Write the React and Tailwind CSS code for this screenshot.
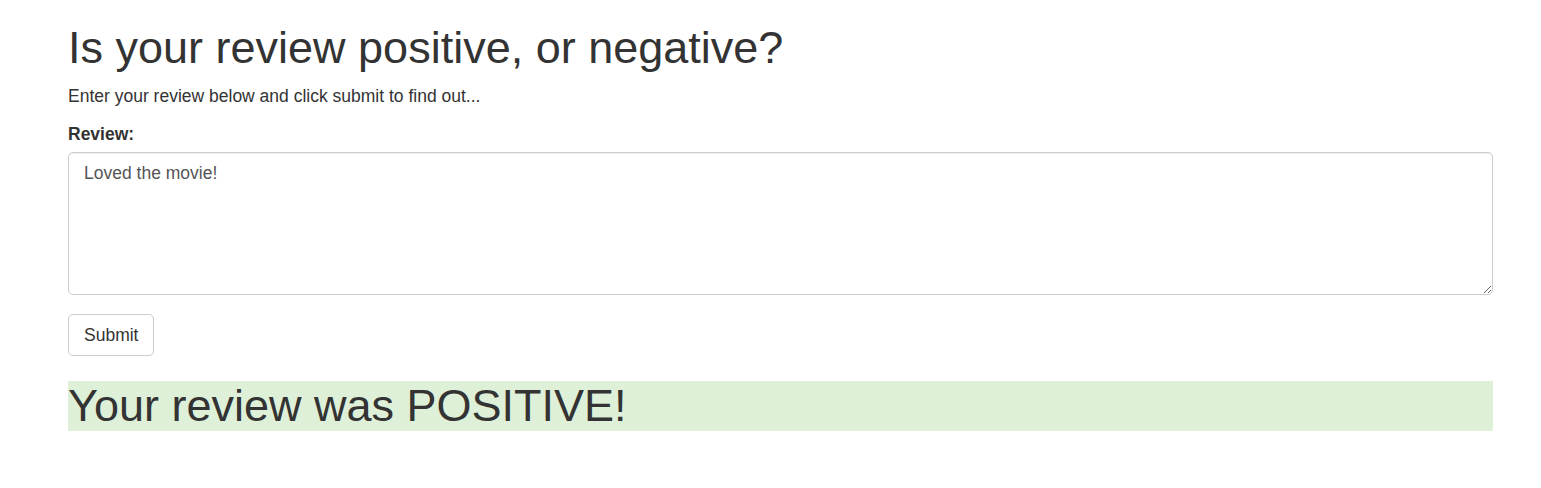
import { useState } from "react";

const App = () => {
  const [review, setReview] = useState("Loved the movie!");
  const [result] = useState("POSITIVE");

  return (
    <div className="min-h-screen bg-white text-[#333] font-['Liberation_Sans',Arial,sans-serif] pl-[68px]">
      <div className="w-[1425px]">
        <h1 className="text-[45px] leading-[49.5px] font-normal mt-[23px] mb-[11px]">
          Is your review positive, or negative?
        </h1>
        <p className="text-[17.5px] leading-[25px] mb-[13px]">
          Enter your review below and click submit to find out...
        </p>

        <form onSubmit={(e) => e.preventDefault()}>
          <div className="mb-[19px]">
            <label className="block text-[17.5px] leading-[25px] font-bold mb-[5.5px]">
              Review:
            </label>
            <textarea
              rows={5}
              value={review}
              onChange={(e) => setReview(e.target.value)}
              className="block w-full h-[143px] px-[15px] py-[7.5px] text-[17.5px] leading-[25px] text-[#555] bg-white border border-[#ccc] rounded-[5px] shadow-[inset_0_1px_1px_rgba(0,0,0,0.075)] outline-none"
            />
          </div>
          <button
            type="submit"
            className="h-[42px] px-[15px] text-[17.5px] leading-[25px] text-[#333] bg-white border border-[#ccc] rounded-[5px]"
          >
            Submit
          </button>
        </form>

        <h1 className="mt-[25px] bg-[#dff0d8] text-[45px] leading-[49.5px] font-normal">
          Your review was {result}!
        </h1>
      </div>
    </div>
  );
};

export default App;
